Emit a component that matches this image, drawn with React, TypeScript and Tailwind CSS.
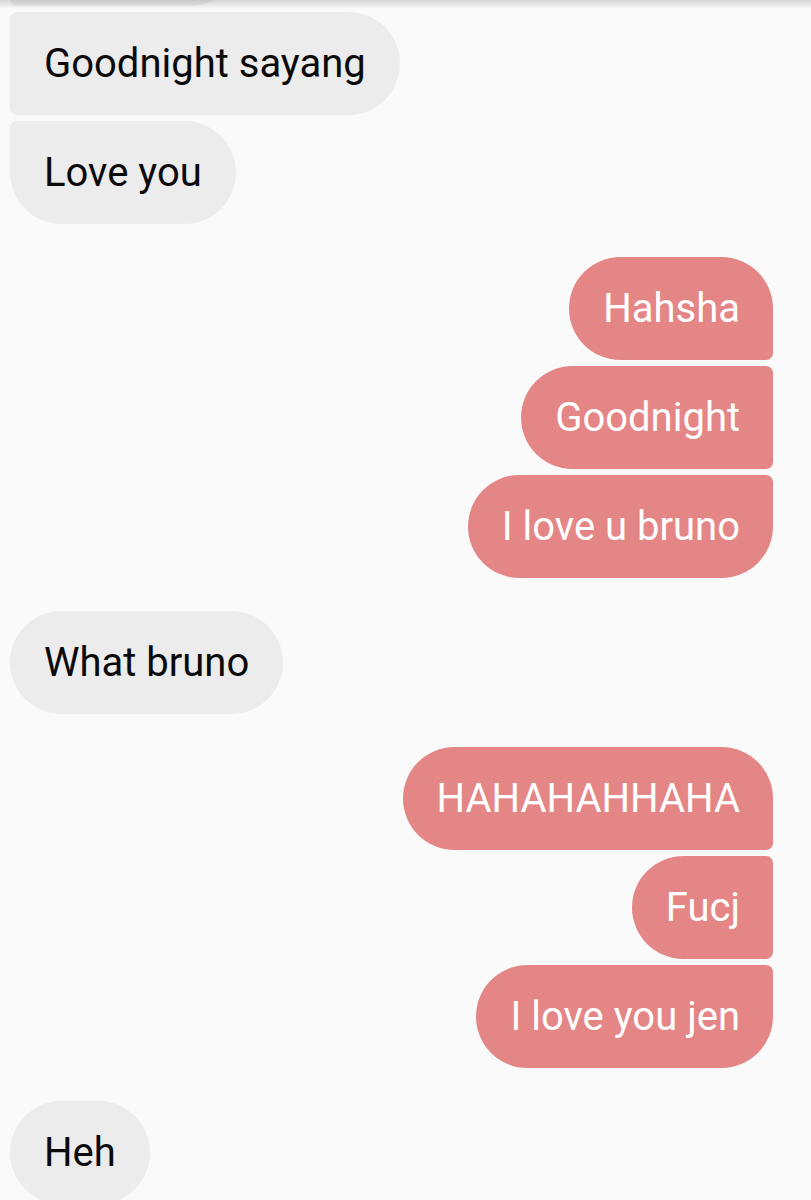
type Msg = { text: string; me: boolean };

const groups: Msg[][] = [
  [
    { text: 'Goodnight sayang', me: false },
    { text: 'Love you', me: false },
  ],
  [
    { text: 'Hahsha', me: true },
    { text: 'Goodnight', me: true },
    { text: 'I love u bruno', me: true },
  ],
  [{ text: 'What bruno', me: false }],
  [
    { text: 'HAHAHAHHAHA', me: true },
    { text: 'Fucj', me: true },
    { text: 'I love you jen', me: true },
  ],
  [{ text: 'Heh', me: false }],
];

// rounded corners depend on where the bubble sits inside its group
const cornerClass = (me: boolean, first: boolean, last: boolean) => {
  if (me) {
    return [
      'rounded-l-[52px]',
      first ? 'rounded-tr-[52px]' : 'rounded-tr-[7px]',
      last ? 'rounded-br-[52px]' : 'rounded-br-[7px]',
    ].join(' ');
  }
  return [
    'rounded-r-[52px]',
    first ? 'rounded-tl-[52px]' : 'rounded-tl-[7px]',
    last ? 'rounded-bl-[52px]' : 'rounded-bl-[7px]',
  ].join(' ');
};

const Bubble = ({ msg, first, last }: { msg: Msg; first: boolean; last: boolean }) => (
  <div
    className={`flex h-[103px] shrink-0 items-center text-[40px] leading-none ${cornerClass(
      msg.me,
      first,
      last,
    )} ${
      msg.me
        ? 'self-end bg-[#e58686] pl-[34px] pr-[33px] text-white'
        : 'self-start bg-[#ececec] pl-[34px] pr-[34px] text-[#0a0a0a]'
    }`}
  >
    {msg.text}
  </div>
);

export default function App() {
  return (
    <div
      className="relative h-[1200px] overflow-hidden bg-[#fafafa]"
      style={{ fontFamily: 'Roboto, "Noto Sans", Arial, sans-serif' }}
    >
      {/* toolbar shadow */}
      <div className="pointer-events-none absolute inset-x-0 top-0 z-10 h-[9px] bg-gradient-to-b from-black/15 to-transparent" />

      <div className="mt-[-97px] flex flex-col gap-[33px] pl-[10px] pr-[38px]">
        <div className="flex flex-col gap-[6px]">
          {/* previous message, scrolled mostly out of view */}
          <div className="h-[103px] w-[232px] shrink-0 rounded-t-[52px] rounded-br-[52px] rounded-bl-[7px] bg-[#ececec]" />
          {groups[0].map((m, i) => (
            <Bubble key={i} msg={m} first={false} last={i === groups[0].length - 1} />
          ))}
        </div>
        {groups.slice(1).map((g, gi) => (
          <div key={gi} className="flex flex-col gap-[6px]">
            {g.map((m, i) => (
              <Bubble key={i} msg={m} first={i === 0} last={i === g.length - 1} />
            ))}
          </div>
        ))}
      </div>
    </div>
  );
}
